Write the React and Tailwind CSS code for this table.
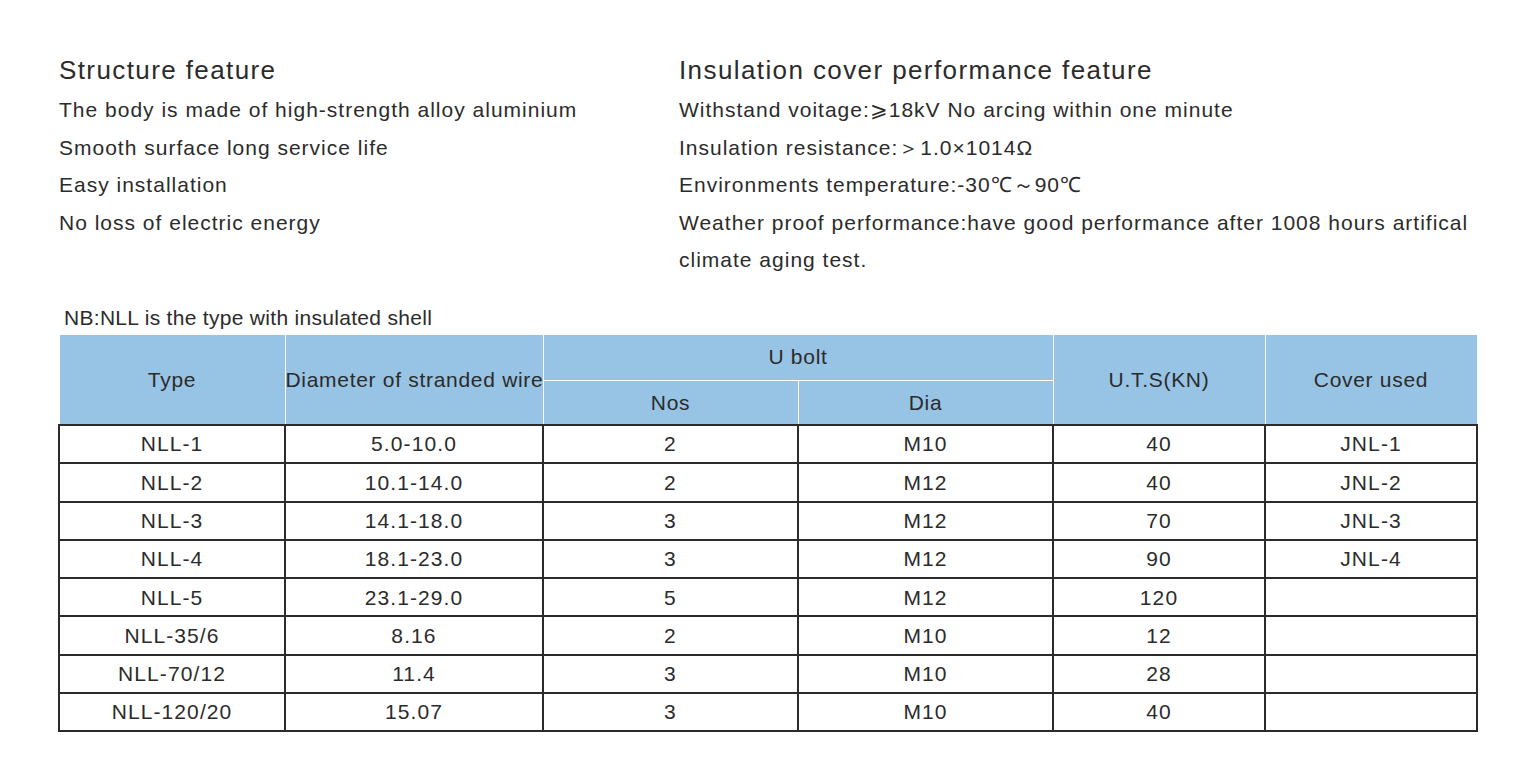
const structure = [
  'The body is made of high-strength alloy aluminium',
  'Smooth surface long service life',
  'Easy installation',
  'No loss of electric energy',
];

const insulation = [
  'Withstand voitage:\u2a7e18kV No arcing within one minute',
  'Insulation resistance:\uff1e1.0\u00d71014\u03a9',
  'Environments temperature:-30\u2103\uff5e90\u2103',
  'Weather proof performance:have good performance after 1008 hours artifical climate aging test.',
];

const rows = [
  ['NLL-1', '5.0-10.0', '2', 'M10', '40', 'JNL-1'],
  ['NLL-2', '10.1-14.0', '2', 'M12', '40', 'JNL-2'],
  ['NLL-3', '14.1-18.0', '3', 'M12', '70', 'JNL-3'],
  ['NLL-4', '18.1-23.0', '3', 'M12', '90', 'JNL-4'],
  ['NLL-5', '23.1-29.0', '5', 'M12', '120', ''],
  ['NLL-35/6', '8.16', '2', 'M10', '12', ''],
  ['NLL-70/12', '11.4', '3', 'M10', '28', ''],
  ['NLL-120/20', '15.07', '3', 'M10', '40', ''],
];

function FeatureList({ title, items, width }) {
  return (
    <div className={width}>
      <h2 className="text-[26px] leading-[36px] tracking-[1.4px]">{title}</h2>
      <ul className="mt-[3px]">
        {items.map((item, i) => (
          <li key={i} className="text-[21px] leading-[37.5px] tracking-[1px]">
            {item}
          </li>
        ))}
      </ul>
    </div>
  );
}

export default function App() {
  const th = 'border border-white bg-[#97c3e4] p-0 font-normal text-[21px] tracking-[0.7px]';
  const td = 'border-2 border-[#2b2b2b] h-[38.3px] p-0 text-center text-[21px] tracking-[1.1px]';

  return (
    <div className="w-[1530px] h-[771px] bg-white text-[#2b2b2b] font-['Liberation_Sans',Arial,sans-serif] pt-[52px] pl-[58px]">
      <div className="flex">
        <FeatureList title="Structure feature" items={structure} width="w-[621px] pl-[1px]" />
        <FeatureList title="Insulation cover performance feature" items={insulation} width="w-[810px]" />
      </div>

      <p className="mt-[27px] pl-[6px] text-[21px] leading-[24px] tracking-[0.3px]">NB:NLL is the type with insulated shell</p>

      <table className="mt-[4px] w-[1418px] table-fixed border-collapse">
        <colgroup>
          <col className="w-[226px]" />
          <col className="w-[258px]" />
          <col className="w-[255px]" />
          <col className="w-[255px]" />
          <col className="w-[212px]" />
          <col className="w-[212px]" />
        </colgroup>
        <thead>
          <tr className="h-[46px]">
            <th rowSpan={2} className={th}>Type</th>
            <th rowSpan={2} className={`${th} tracking-[0.4px] whitespace-nowrap`}>Diameter of stranded wire</th>
            <th colSpan={2} className={th}>U bolt</th>
            <th rowSpan={2} className={th}>U.T.S(KN)</th>
            <th rowSpan={2} className={th}>Cover used</th>
          </tr>
          <tr className="h-[45px]">
            <th className={th}>Nos</th>
            <th className={th}>Dia</th>
          </tr>
        </thead>
        <tbody>
          {rows.map((row, i) => (
            <tr key={i}>
              {row.map((cell, j) => (
                <td key={j} className={td}>{cell}</td>
              ))}
            </tr>
          ))}
        </tbody>
      </table>
    </div>
  );
}
